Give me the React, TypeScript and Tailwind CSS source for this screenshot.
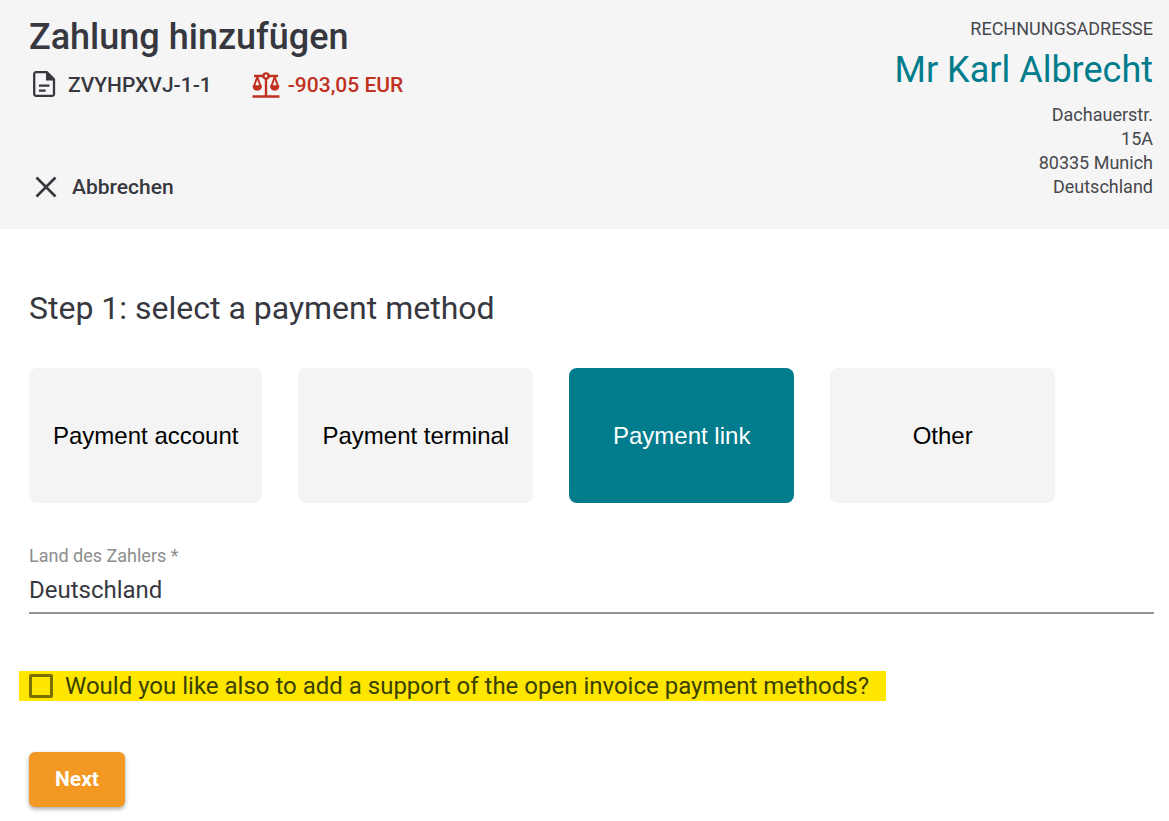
import type React from "react";
import { useState } from "react";

const paymentMethods = [
	"Payment account",
	"Payment terminal",
	"Payment link",
	"Other",
];

const InvoiceIcon: React.FC = () => (
	<svg
		className="h-7 w-6"
		viewBox="0 0 24 28"
		fill="none"
		stroke="currentColor"
		aria-hidden="true"
	>
		<path
			d="M4 1.2h11L22 8.400V23a1.800 1.800 0 0 1-1.800 1.800H4A1.800 1.800 0 0 1 2.200 23V3A1.800 1.800 0 0 1 4 1.200z"
			strokeWidth="2.3"
			strokeLinejoin="round"
		/>
		<path d="M14 1v8.500h8.500z" fill="currentColor" stroke="none" />
		<path d="M7 14.600h10.400M7 19.600h6.600" strokeWidth="2.2" />
	</svg>
);

const BalanceIcon: React.FC = () => (
	<svg
		className="h-7 w-7"
		viewBox="0 0 28 28"
		fill="none"
		stroke="currentColor"
		strokeWidth="2.4"
		aria-hidden="true"
	>
		<path d="M2 5h9.500M16.500 5H26M14 8v17M.5 25.500h27" />
		<circle cx="14" cy="5" r="2.600" />
		<path
			d="M5.300 6 1.900 15.500h6.800zM22.700 6l-3.400 9.500h6.800z"
			strokeWidth="2"
			strokeLinejoin="round"
		/>
		<path
			d="M.6 14.500h9.400c0 3.300-1.600 5.200-4.700 5.200s-4.700-1.900-4.700-5.200zM18 14.500h9.400c0 3.300-1.600 5.200-4.700 5.200s-4.700-1.900-4.700-5.200z"
			fill="currentColor"
			stroke="none"
		/>
	</svg>
);

const CloseIcon: React.FC = () => (
	<svg
		className="h-6 w-6"
		viewBox="0 0 24 24"
		fill="none"
		stroke="currentColor"
		strokeWidth="2.6"
		aria-hidden="true"
	>
		<path d="M2.500 2.500l19 19M21.500 2.500l-19 19" />
	</svg>
);

const PageHeader: React.FC = () => (
	<header className="flex justify-between bg-[#f5f5f5] pt-[17px] pr-4 pb-[30px] pl-[29px]">
		<div className="flex flex-col justify-between">
			<div>
				<h1 className="text-4xl font-medium">Zahlung hinzufügen</h1>
				<div className="mt-3.5 flex items-center gap-10 text-[21px] leading-7 font-medium">
					<p className="flex items-center gap-3 pl-[3px]">
						<InvoiceIcon />
						ZVYHPXVJ-1-1
					</p>
					<p className="flex items-center gap-2 text-[#c0311f]">
						<BalanceIcon />
						-903,05 EUR
					</p>
				</div>
			</div>
			<button
				type="button"
				className="flex cursor-pointer items-center gap-3.5 self-start pl-[5px] text-[21px] leading-6 font-medium"
			>
				<CloseIcon />
				Abbrechen
			</button>
		</div>
		<address className="text-right text-lg leading-6 text-[#47484e] not-italic">
			<p>RECHNUNGSADRESSE</p>
			<p className="mt-[9px] mb-[13px] text-4xl text-[#007c8c]">
				Mr Karl Albrecht
			</p>
			<p>Dachauerstr.</p>
			<p>15A</p>
			<p>80335 Munich</p>
			<p>Deutschland</p>
		</address>
	</header>
);

const App: React.FC = () => {
	const [method, setMethod] = useState("Payment link");
	const [openInvoice, setOpenInvoice] = useState(false);

	return (
		<div className="font-['Roboto',sans-serif] text-[#37383f]">
			<PageHeader />
			<main className="pt-[55px] pr-[15px] pb-3.5 pl-[29px]">
				<h2 className="text-[32px] leading-12">
					Step 1: select a payment method
				</h2>
				<div className="mt-9 flex flex-wrap gap-9">
					{paymentMethods.map((name) => (
						<button
							key={name}
							type="button"
							onClick={() => setMethod(name)}
							aria-pressed={name === method}
							className={`h-[135px] min-w-[225px] cursor-pointer rounded-lg px-6 font-['Liberation_Sans',Arial,sans-serif] text-2xl ${
								name === method
									? "bg-[#007c8c] text-white"
									: "bg-[#f4f4f4] text-black"
							}`}
						>
							{name}
						</button>
					))}
				</div>
				<div className="mt-[41px] border-b-2 border-[#949494]">
					<label
						htmlFor="country"
						className="block text-lg leading-6 text-[#8d8d8d]"
					>
						Land des Zahlers *
					</label>
					<select
						id="country"
						className="my-0.5 block h-10 w-full appearance-none bg-transparent text-2xl outline-none"
					>
						<option>Deutschland</option>
					</select>
				</div>
				<label className="mt-[57px] -ml-2.5 flex h-[30px] w-fit items-center gap-3 bg-[#ffe600] pr-[17px] pl-2.5 text-2xl text-[#3a4000]">
					<input
						type="checkbox"
						checked={openInvoice}
						onChange={(e) => setOpenInvoice(e.target.checked)}
						className="h-6 w-6 shrink-0 appearance-none rounded-xs border-3 border-[#7a7000] checked:bg-[#7a7000]"
					/>
					Would you like also to add a support of the open invoice payment
					methods?
				</label>
				<button
					type="button"
					className="mt-[51px] block h-[55px] cursor-pointer rounded-md bg-[#f39822] px-[26px] text-[21px] font-bold text-white shadow-[0_2px_4px_rgba(0,0,0,0.35)]"
				>
					Next
				</button>
			</main>
		</div>
	);
};

export default App;
